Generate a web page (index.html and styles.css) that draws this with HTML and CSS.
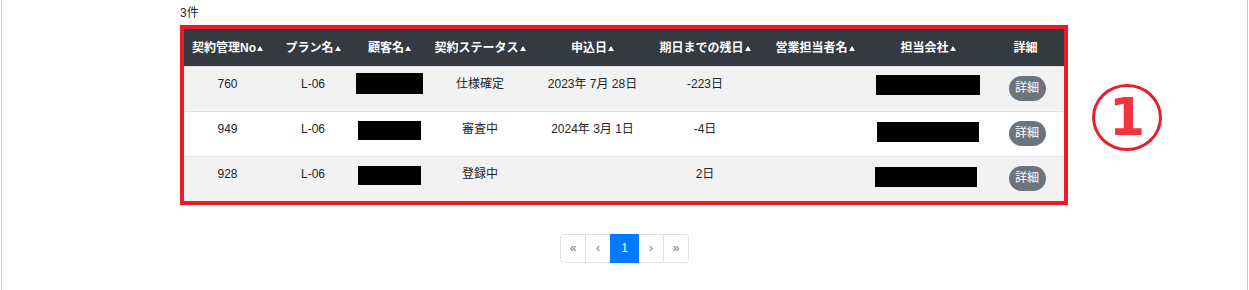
FILE: index.html
```html
<!DOCTYPE html>
<html lang="ja">
<head>
<meta charset="utf-8">
<title>契約一覧</title>
<link rel="stylesheet" href="styles.css">
</head>
<body>
<div class="frame">
  <div class="content">
    <div class="count">3件</div>
    <div class="highlight">
      <table class="list">
        <colgroup>
          <col class="c1"><col class="c2"><col class="c3"><col class="c4"><col class="c5"><col class="c6"><col class="c7"><col class="c8"><col class="c9">
        </colgroup>
        <thead>
          <tr>
            <th>契約管理No<span class="sort"></span></th>
            <th>プラン名<span class="sort"></span></th>
            <th>顧客名<span class="sort"></span></th>
            <th>契約ステータス<span class="sort"></span></th>
            <th>申込日<span class="sort"></span></th>
            <th>期日までの残日<span class="sort"></span></th>
            <th>営業担当者名<span class="sort"></span></th>
            <th>担当会社<span class="sort"></span></th>
            <th>詳細</th>
          </tr>
        </thead>
        <tbody>
          <tr class="odd">
            <td>760</td>
            <td>L-06</td>
            <td><span class="redact redact-name-a"></span></td>
            <td>仕様確定</td>
            <td>2023年 7月 28日</td>
            <td>-223日</td>
            <td></td>
            <td><span class="redact redact-co-a"></span></td>
            <td><span class="btn-detail">詳細</span></td>
          </tr>
          <tr>
            <td>949</td>
            <td>L-06</td>
            <td><span class="redact redact-name-b"></span></td>
            <td>審査中</td>
            <td>2024年 3月 1日</td>
            <td>-4日</td>
            <td></td>
            <td><span class="redact redact-co-b"></span></td>
            <td><span class="btn-detail">詳細</span></td>
          </tr>
          <tr class="odd">
            <td>928</td>
            <td>L-06</td>
            <td><span class="redact redact-name-b"></span></td>
            <td>登録中</td>
            <td></td>
            <td>2日</td>
            <td></td>
            <td><span class="redact redact-co-c"></span></td>
            <td><span class="btn-detail">詳細</span></td>
          </tr>
        </tbody>
      </table>
    </div>
    <nav class="pager">
      <span class="page-item">«</span>
      <span class="page-item">‹</span>
      <span class="page-item active">1</span>
      <span class="page-item">›</span>
      <span class="page-item">»</span>
    </nav>
  </div>
  <div class="marker">1</div>
</div>
</body>
</html>
```
FILE: styles.css
```css
html, body {
  margin: 0;
  padding: 0;
  background: #ffffff;
}

body {
  font-family: "Liberation Sans", "Noto Sans CJK JP", sans-serif;
  font-size: 12px;
  color: #212529;
}

.frame {
  position: relative;
  margin-left: 1px;
  width: 1247px;
  box-sizing: border-box;
  border: 1px solid #c8c8c8;
  border-top: none;
  padding-bottom: 29px;
}

.content {
  padding-left: 178px;
}

.count {
  padding-top: 4px;
  line-height: 18px;
  margin-bottom: 3px;
}

.highlight {
  display: inline-block;
  border: 4px solid #ed1c24;
}

.list {
  width: 880px;
  table-layout: fixed;
  border-collapse: separate;
  border-spacing: 0;
}

.c1 { width: 87px; }
.c2 { width: 84px; }
.c3 { width: 69px; }
.c4 { width: 112px; }
.c5 { width: 113px; }
.c6 { width: 112px; }
.c7 { width: 108px; }
.c8 { width: 118px; }
.c9 { width: 77px; }

.list thead tr {
  height: 37px;
}

.list th {
  background: #343a40;
  color: #ffffff;
  font-weight: bold;
  font-size: 12px;
  line-height: 16px;
  padding: 0;
  text-align: center;
  vertical-align: middle;
  white-space: nowrap;
}

.sort {
  display: inline-block;
  width: 0;
  height: 0;
  margin-left: 1px;
  border-left: 3.5px solid transparent;
  border-right: 3.5px solid transparent;
  border-bottom: 5px solid #ffffff;
  vertical-align: 1px;
}

.list tbody tr {
  height: 45px;
  background: #ffffff;
}

.list tbody tr.odd {
  background: #f2f2f2;
}

.list td {
  border-top: 1px solid #dee2e6;
  padding: 8px 0;
  line-height: 19px;
  text-align: center;
  vertical-align: top;
  white-space: nowrap;
}

.redact {
  display: inline-block;
  background: #000000;
  vertical-align: top;
}

.redact-name-a { width: 67px; height: 21px; margin-top: -2px; }
.redact-name-b { width: 63px; height: 19px; margin-top: 1px; }
.redact-co-a { width: 104px; height: 20px; margin-top: 0; }
.redact-co-b { width: 102px; height: 20px; margin-top: 2px; }
.redact-co-c { width: 102px; height: 20px; margin-top: 2px; margin-right: 4px; }

.btn-detail {
  display: inline-block;
  width: 37px;
  height: 25px;
  margin-top: 1px;
  margin-left: 3px;
  border-radius: 12.5px;
  background: #6c757d;
  color: #ffffff;
  font-size: 12px;
  line-height: 25px;
  text-align: center;
  vertical-align: top;
}

.pager {
  display: flex;
  justify-content: center;
  margin-top: 26px;
  margin-left: -178px;
}

.page-item {
  display: block;
  padding: 4px 8.5px;
  line-height: 19px;
  font-size: 12px;
  color: #6c757d;
  background: #ffffff;
  border: 1px solid #dee2e6;
  margin-left: -1px;
  min-width: 7px;
  text-align: center;
}

.page-item:first-child {
  margin-left: 0;
  border-radius: 4px 0 0 4px;
}

.page-item:last-child {
  border-radius: 0 4px 4px 0;
}

.page-item.active {
  background: #007bff;
  border-color: #007bff;
  color: #ffffff;
  padding: 4px 10px;
  position: relative;
}

.marker {
  position: absolute;
  left: 1090px;
  top: 84px;
  width: 70px;
  height: 67px;
  box-sizing: border-box;
  border: 3px solid #e91e28;
  border-radius: 50%;
  color: #f0353f;
  font-family: "DejaVu Sans", sans-serif;
  font-weight: bold;
  font-size: 52px;
  line-height: 61px;
  text-align: center;
}
```
